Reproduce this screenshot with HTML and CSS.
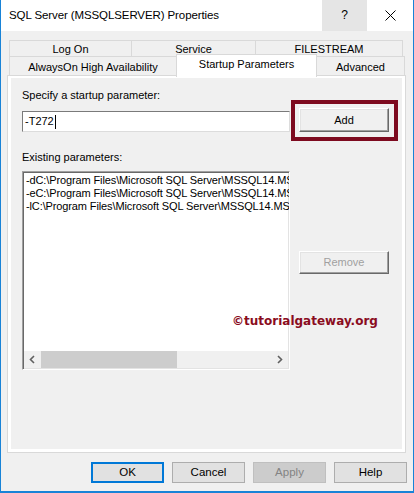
FILE: index.html
```html
<!DOCTYPE html>
<html>
<head>
<meta charset="utf-8">
<link rel="stylesheet" href="styles.css">
</head>
<body>
<div class="window">
  <div class="titlebar">
    <div class="title">SQL Server (MSSQLSERVER) Properties</div>
    <div class="tb-help">?</div>
    <div class="tb-close">
      <svg width="11" height="11" viewBox="0 0 11 11"><path d="M0.5 0.5 L10.5 10.5 M10.5 0.5 L0.5 10.5" stroke="#000" stroke-width="1" fill="none"/></svg>
    </div>
  </div>
  <div class="content">
    <div class="tabrow row1">
      <div class="tab w-logon">Log On</div>
      <div class="tab w-service">Service</div>
      <div class="tab w-file last">FILESTREAM</div>
    </div>
    <div class="tabrow row2">
      <div class="tab w-always">AlwaysOn High Availability</div>
      <div class="tab w-startup selected">Startup Parameters</div>
      <div class="tab w-adv last noleft">Advanced</div>
    </div>
    <div class="panel">
      <div class="panel-inner">
        <div class="leftcol">
          <div class="label first">Specify a startup parameter:</div>
          <div class="textbox">-T272<span class="caret"></span></div>
          <div class="label second">Existing parameters:</div>
          <div class="listbox">
            <div class="items">
              <div class="item">-dC:\Program Files\Microsoft SQL Server\MSSQL14.MSSQLSERVER\MSSQL\DATA\master.mdf</div>
              <div class="item">-eC:\Program Files\Microsoft SQL Server\MSSQL14.MSSQLSERVER\MSSQL\Log\ERRORLOG</div>
              <div class="item">-lC:\Program Files\Microsoft SQL Server\MSSQL14.MSSQLSERVER\MSSQL\DATA\mastlog.ldf</div>
            </div>
            <div class="hscroll">
              <div class="arrow">
                <svg width="17" height="17" viewBox="0 0 17 17"><polyline points="10,5 6.5,8.5 10,12" stroke="#606060" stroke-width="1.6" fill="none"/></svg>
              </div>
              <div class="thumb"></div>
              <div class="track"></div>
              <div class="arrow">
                <svg width="17" height="17" viewBox="0 0 17 17"><polyline points="7,5 10.5,8.5 7,12" stroke="#606060" stroke-width="1.6" fill="none"/></svg>
              </div>
            </div>
          </div>
        </div>
        <div class="rightcol">
          <div class="highlight">
            <div class="btn3d">Add</div>
          </div>
          <div class="btn3d disabled remove">Remove</div>
        </div>
        <div class="watermark">©tutorialgateway.org</div>
      </div>
    </div>
    <div class="buttons">
      <div class="btn default">OK</div>
      <div class="btn">Cancel</div>
      <div class="btn off">Apply</div>
      <div class="btn">Help</div>
    </div>
  </div>
</div>
</body>
</html>
```
FILE: styles.css
```css
html, body {
  margin: 0;
  padding: 0;
  background: #f0f0f0;
}
body {
  font-family: "Liberation Sans", Arial, sans-serif;
  font-size: 11px;
  color: #000;
}
.window {
  width: 414px;
  height: 493px;
  box-sizing: border-box;
  border-left: 1px solid #1883d7;
  border-right: 1px solid #1883d7;
  border-bottom: 2px solid #1883d7;
  background: #f0f0f0;
  display: flex;
  flex-direction: column;
}
.titlebar {
  height: 31px;
  background: #fff;
  display: flex;
  align-items: stretch;
  flex: none;
}
.title {
  flex: 1;
  padding-left: 8px;
  line-height: 31px;
  font-size: 11.5px;
  letter-spacing: -0.1px;
}
.tb-help {
  width: 45px;
  background: #e5e5e5;
  text-align: center;
  line-height: 31px;
  font-size: 12px;
}
.tb-close {
  width: 46px;
  display: flex;
  align-items: center;
  justify-content: center;
}
.content {
  flex: 1;
  display: flex;
  flex-direction: column;
  padding-top: 9px;
}
.tabrow {
  display: flex;
  margin-left: 8px;
  align-items: flex-start;
}
.row1 { height: 16px; }
.row2 { height: 19px; }
.tab {
  box-sizing: border-box;
  border-top: 1px solid #d9d9d9;
  border-left: 1px solid #d9d9d9;
  background: #f0f0f0;
  text-align: center;
  flex: none;
}
.row1 .tab { height: 17px; line-height: 16px; }
.row2 .tab { height: 20px; line-height: 20px; }
.tab.last { border-right: 1px solid #d9d9d9; }
.tab.noleft { border-left: none; }
.w-logon { width: 122px; }
.w-service { width: 124px; }
.w-file { width: 148px; }
.w-always { width: 167px; }
.w-startup { width: 141px; }
.w-adv { width: 88px; }
.tab.selected {
  position: relative;
  z-index: 1;
  background: #fff;
  border-right: 1px solid #d9d9d9;
  margin-top: -2px;
  height: 23px;
  line-height: 19px;
}
.panel {
  margin-left: 6px;
  width: 399px;
  height: 378px;
  box-sizing: border-box;
  border: 1px solid #d9d9d9;
  background: #fff;
  padding: 2px 3px 3px 3px;
  flex: none;
}
.panel-inner {
  position: relative;
  height: 100%;
  background: #f0f0f0;
  display: flex;
  align-items: flex-start;
}
.leftcol {
  padding-left: 11px;
  width: 268px;
  flex: none;
}
.label {
  line-height: 14px;
  white-space: nowrap;
}
.label.first { margin-top: 10px; }
.label.second { margin-top: 18px; }
.textbox {
  margin-top: 9px;
  height: 21px;
  box-sizing: border-box;
  background: #fff;
  border-top: 1px solid #7a7a7a;
  border-left: 1px solid #7a7a7a;
  border-right: 1px solid #dcdcdc;
  border-bottom: 1px solid #dcdcdc;
  padding-left: 2px;
  line-height: 19px;
  display: flex;
  align-items: center;
}
.caret {
  display: inline-block;
  width: 1px;
  height: 14px;
  background: #000;
  margin-left: 1px;
}
.listbox {
  margin-top: 7px;
  height: 199px;
  box-sizing: border-box;
  background: #fff;
  border-top: 1px solid #a0a0a0;
  border-left: 1px solid #a0a0a0;
  border-right: 1px solid #fff;
  border-bottom: 1px solid #fff;
  box-shadow: inset 1px 1px 0 #696969, inset -1px -1px 0 #e3e3e3;
  display: flex;
  flex-direction: column;
  overflow: hidden;
}
.items {
  flex: 1;
  padding: 2px 0 0 3px;
  overflow: hidden;
}
.item {
  line-height: 13px;
  white-space: nowrap;
  letter-spacing: -0.12px;
}
.hscroll {
  height: 17px;
  margin: 0 1px 1px 1px;
  display: flex;
  background: #f0f0f0;
  flex: none;
}
.arrow {
  width: 17px;
  height: 17px;
  flex: none;
}
.arrow svg { display: block; }
.thumb {
  width: 136px;
  background: #cdcdcd;
  flex: none;
}
.track { flex: 1; }
.rightcol {
  margin-left: 1px;
  display: flex;
  flex-direction: column;
  align-items: flex-start;
}
.highlight {
  margin-top: 22px;
  border: 4px solid #7d0a1f;
  padding: 4px 5px 5px 4px;
}
.btn3d {
  width: 90px;
  height: 24px;
  box-sizing: border-box;
  background: #f0f0f0;
  border-top: 1px solid #fff;
  border-left: 1px solid #fff;
  border-right: 1px solid #696969;
  border-bottom: 1px solid #696969;
  box-shadow: inset -1px -1px 0 #a0a0a0, inset 1px 1px 0 #e3e3e3;
  text-align: center;
  line-height: 22px;
}
.btn3d.remove {
  margin-top: 110px;
  margin-left: 8px;
  height: 23px;
  line-height: 21px;
}
.btn3d.disabled { color: #a0a0a0; }
.watermark {
  position: absolute;
  left: 221px;
  top: 236px;
  font-family: "DejaVu Sans", Verdana, sans-serif;
  font-weight: bold;
  font-size: 12px;
  color: #8a0c1e;
  white-space: nowrap;
}
.buttons {
  margin-top: 9px;
  display: flex;
  justify-content: flex-end;
  gap: 8px;
  padding-right: 6px;
}
.btn {
  width: 73px;
  height: 21px;
  box-sizing: border-box;
  background: #e1e1e1;
  border: 1px solid #adadad;
  text-align: center;
  line-height: 19px;
  font-size: 11.5px;
}
.btn.default {
  border: 2px solid #0078d7;
  line-height: 17px;
}
.btn.off {
  background: #cccccc;
  border-color: #bfbfbf;
  color: #838383;
}
```
